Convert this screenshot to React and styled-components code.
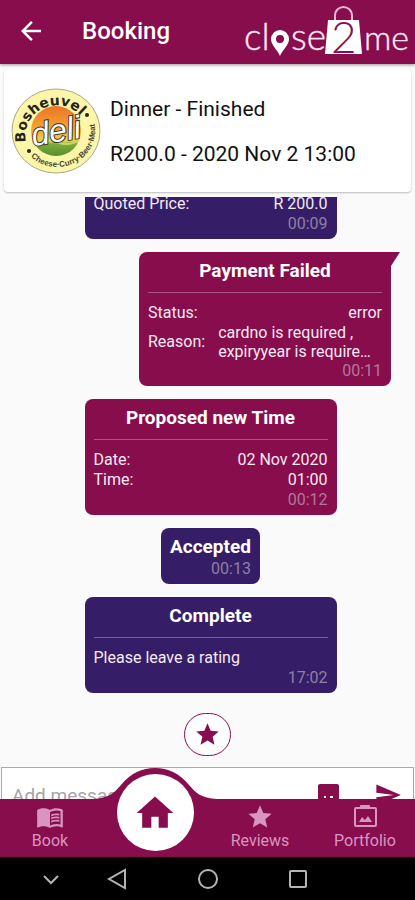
import styled, { createGlobalStyle } from 'styled-components'
import { MdArrowBack, MdHome, MdMenuBook, MdSend, MdStar } from 'react-icons/md'

const MAROON = '#870d4d'
const INDIGO = '#351e67'

const messages = [
      { id: 1, color: INDIGO, rows: [['Quoted Price:', 'R 200.0']], time: '00:09' },
      {
            id: 2,
            color: MAROON,
            own: true,
            title: 'Payment Failed',
            rows: [['Status:', 'error']],
            reason: 'cardno is required , expiryyear is require…',
            time: '00:11',
      },
      { id: 3, color: MAROON, title: 'Proposed new Time', rows: [['Date:', '02 Nov 2020'], ['Time:', '01:00']], time: '00:12' },
      { id: 4, color: INDIGO, small: true, title: 'Accepted', time: '00:13' },
      { id: 5, color: INDIGO, title: 'Complete', text: 'Please leave a rating', time: '17:02' },
]

const Logo = () => (
      <svg width="168" height="58" viewBox="0 0 168 58" role="img" aria-label="close2me">
            <g fill="#ffe6f3" stroke="#ffe6f3" strokeWidth="0.4" fontFamily="Lato, sans-serif" fontWeight="300" fontSize="37">
                  <text x="0" y="48">cl</text>
                  <text x="47" y="48">se</text>
                  <text x="120" y="48" fontSize="34">me</text>
            </g>
            <path fill="#fff" fillRule="evenodd" d="M36 28a9 9 0 0 1 9 9c0 6-6 10-9 17c-3-7-9-11-9-17a9 9 0 0 1 9-9zM36 33a4 4 0 1 0 0 8a4 4 0 0 0 0-8z" />
            <path fill="none" stroke="#f0b5d3" strokeWidth="2" d="M91 18v-4c0-12 17-12 17 0v4" />
            <path fill="#fff" d="M84 18h31l3 34H81z" />
            <text x="87" y="51" fill={MAROON} fontFamily="Lato, sans-serif" fontWeight="300" fontSize="44">2</text>
      </svg>
)

const DeliBadge = () => (
      <svg width="90" height="86" viewBox="0 0 90 86" role="img" aria-label="Bosheuvel deli">
            <defs>
                  <linearGradient id="sky" x1="0" y1="0" x2="0" y2="1">
                        <stop offset="0" stopColor="#e9742b" />
                        <stop offset="0.5" stopColor="#f7a92f" />
                        <stop offset="0.7" stopColor="#f4d24d" />
                        <stop offset="0.76" stopColor="#7dac3a" />
                        <stop offset="1" stopColor="#55902f" />
                  </linearGradient>
                  <path id="upperArc" d="M16 58A31 30 0 1 1 76 38" />
                  <path id="lowerArc" d="M17 66A38 36 0 0 0 83 34" />
            </defs>
            <ellipse cx="45" cy="43" rx="44" ry="42" fill="#fbf6a8" stroke="#a9a88e" />
            <circle cx="45" cy="43" r="25" fill="url(#sky)" />
            <path d="M22 54q12-5 24 0t22-2" fill="none" stroke="#c4d869" strokeWidth="2" />
            <text fill="#262419" fontFamily="'DejaVu Sans', sans-serif" fontWeight="700" fontSize="14">
                  <textPath href="#upperArc" startOffset="4">Bosheuvel</textPath>
            </text>
            <text fill="#4a4734" fontFamily="'Liberation Sans', sans-serif" fontWeight="700" fontSize="8">
                  <textPath href="#lowerArc" startOffset="4">Cheese·Curry·Beer·Meat</textPath>
            </text>
            <circle cx="18" cy="63" r="2" fill="#262419" />
            <circle cx="76" cy="27" r="2" fill="#262419" />
            <text
                  x="20" y="54" fill="#fff" stroke="#3a3427" strokeWidth="2" paintOrder="stroke" transform="rotate(-10 45 43)"
                  fontFamily="'Liberation Sans', sans-serif" fontStyle="italic" fontSize="32"
            >deli</text>
      </svg>
)

const PortfolioIcon = () => (
      <svg width="26" height="26" viewBox="0 0 26 26" aria-hidden="true">
            <rect x="3" y="5" width="21" height="18" rx="1" fill="none" stroke="currentColor" strokeWidth="2" />
            <path fill="currentColor" d="M8 5V3q0-1 1-1h8q1 0 1 1v2zM7 19l3-5l3 3l3-4l4 6z" />
      </svg>
)

const StickerIcon = () => (
      <svg width="22" height="22" viewBox="0 0 22 22" aria-hidden="true">
            <rect width="21" height="21" rx="2" fill="currentColor" />
            <path fill="#fff" d="M6 12h2v2H6zM12 12h3v2h-3zM6 16h9v2H6z" />
      </svg>
)

const Message = ({ color, own, small, title, rows = [], reason, text, time }) => (
      <Bubble $color={color} $own={own} $small={small}>
            {title && <BubbleTitle>{title}</BubbleTitle>}
            {title && !small && <Divider />}
            {rows.map(([label, value]) => (
                  <Row key={label}><span>{label}</span><span>{value}</span></Row>
            ))}
            {reason && <Row><span>Reason:</span><Reason>{reason}</Reason></Row>}
            {text && <Row>{text}</Row>}
            <Time>{time}</Time>
      </Bubble>
)

const App = () => (
      <Screen>
            <GlobalStyle />
            <Header>
                  <BackButton aria-label="Back"><MdArrowBack size={30} /></BackButton>
                  <HeaderTitle>Booking</HeaderTitle>
                  <Logo />
            </Header>
            <BookingCard>
                  <DeliBadge />
                  <BookingInfo>
                        <p>Dinner - Finished</p>
                        <p>R200.0 - 2020 Nov 2 13:00</p>
                  </BookingInfo>
            </BookingCard>
            <Chat>
                  <MessageList>
                        {messages.map(({ id, ...message }) => <Message key={id} {...message} />)}
                        <RateButton aria-label="Leave a rating"><MdStar size={27} /></RateButton>
                  </MessageList>
            </Chat>
            <Composer>
                  <MessageInput aria-label="Message" placeholder="Add message" />
                  <ComposerButton aria-label="Stickers"><StickerIcon /></ComposerButton>
                  <ComposerButton aria-label="Send"><MdSend size={28} /></ComposerButton>
            </Composer>
            <TabBar>
                  <Tab href="#book"><MdMenuBook size={28} />Book</Tab>
                  <HomeSlot>
                        <Bump width="124" height="32" viewBox="0 0 124 32" aria-hidden="true">
                              <path fill={MAROON} d="M0 31C16 30 21 25 28 17C38 5 49 0 62 0S86 5 96 17C103 25 108 30 124 31V32H0z" />
                        </Bump>
                        <HomeLink href="#home" aria-label="Home"><MdHome size={44} /></HomeLink>
                  </HomeSlot>
                  <Tab href="#reviews"><MdStar size={28} />Reviews</Tab>
                  <Tab href="#portfolio"><PortfolioIcon />Portfolio</Tab>
            </TabBar>
            <SystemBar>
                  <SystemButton aria-label="Hide keyboard">
                        <svg width="22" height="22" viewBox="0 0 22 22"><path d="M4 8l7 7l7-7" /></svg>
                  </SystemButton>
                  <SystemButton aria-label="System back">
                        <svg width="22" height="22" viewBox="0 0 22 22"><path d="M18 2v18L2 11z" /></svg>
                  </SystemButton>
                  <SystemButton aria-label="System home">
                        <svg width="22" height="22" viewBox="0 0 22 22"><circle cx="11" cy="11" r="9" /></svg>
                  </SystemButton>
                  <SystemButton aria-label="Recent apps">
                        <svg width="22" height="22" viewBox="0 0 22 22"><rect x="3" y="3" width="16" height="16" rx="1" /></svg>
                  </SystemButton>
            </SystemBar>
      </Screen>
)

export default App


const GlobalStyle = createGlobalStyle`
      * {
            box-sizing: border-box;
      }

      body {
            margin: 0;
            background: #fafafa;
            font-family: Roboto, sans-serif;
      }

      button {
            padding: 0;
            border: 0;
            background: none;
            font: inherit;
      }

      h1, h2, p {
            margin: 0;
      }

      svg {
            display: block;
      }
`

const Screen = styled.div`
      display: flex;
      flex-direction: column;
      height: 100vh;
      overflow: hidden;
`

const Header = styled.header`
      display: flex;
      align-items: center;
      flex-shrink: 0;
      height: 64px;
      padding: 0 3px 2px 16px;
      background: ${MAROON};
      color: #fff;
      box-shadow: 0 1px 3px rgba(0, 0, 0, 0.4);
`

const BackButton = styled.button`
      display: flex;
      color: inherit;
`

const HeaderTitle = styled.h1`
      flex: 1;
      margin-left: 36px;
      font-size: 24px;
      line-height: 28px;
      font-weight: 500;
`

const BookingCard = styled.section`
      display: flex;
      align-items: center;
      flex-shrink: 0;
      gap: 9px;
      margin: 6px 4px 5px;
      padding: 18px 7px;
      border-radius: 4px;
      background: #fff;
      box-shadow: 0 1px 2px rgba(0, 0, 0, 0.25);
`

const BookingInfo = styled.div`
      display: grid;
      gap: 17px;
      color: #111;
      font-size: 21px;
      line-height: 28px;
`

/* column-reverse keeps the newest message in view */
const Chat = styled.main`
      display: flex;
      flex-direction: column-reverse;
      flex: 1;
      min-height: 0;
      overflow-y: auto;
      scrollbar-width: none;
`

const MessageList = styled.div`
      display: flex;
      flex-direction: column;
      align-items: center;
      gap: 13px;
      padding: 13px 24px 11px;
`

const Bubble = styled.article`
      position: relative;
      align-self: ${({ $own }) => ($own ? 'flex-end' : 'center')};
      width: ${({ $small }) => ($small ? 'auto' : '252px')};
      margin-left: 6px;
      padding: 7px 9px 5px;
      border-radius: ${({ $own }) => ($own ? '8px 0 8px 8px' : '8px')};
      background: ${({ $color }) => $color};
      color: #f7e9f1;
      font-size: 16px;
      line-height: 20px;

      &::after {
            content: '';
            display: ${({ $own }) => ($own ? 'block' : 'none')};
            position: absolute;
            top: 0;
            left: 100%;
            width: 9px;
            height: 14px;
            background: inherit;
            clip-path: polygon(0 0, 100% 0, 0 100%);
      }
`

const BubbleTitle = styled.h2`
      color: #fff;
      font-size: 19px;
      line-height: 24px;
      font-weight: 700;
      text-align: center;
`

const Divider = styled.div`
      height: 1px;
      margin: 9px 0 10px;
      background: rgba(255, 255, 255, 0.3);
`

const Row = styled.div`
      display: flex;
      align-items: center;
      justify-content: space-between;
      gap: 13px;
`

const Reason = styled.span`
      flex: 1;
      line-height: 19px;
`

const Time = styled.div`
      color: rgba(205, 195, 205, 0.6);
      text-align: right;
`

const RateButton = styled.button`
      display: flex;
      align-items: center;
      justify-content: center;
      width: 47px;
      height: 43px;
      margin-top: 7px;
      border: 1px solid ${MAROON};
      border-radius: 22px;
      background: #fff;
      color: ${MAROON};
`

const Composer = styled.form`
      display: flex;
      align-items: center;
      flex-shrink: 0;
      gap: 34px;
      height: 56px;
      margin: 0 1px;
      padding: 0 11px 0 10px;
      border: 1px solid #aaa;
      background: #fff;
`

const MessageInput = styled.input`
      flex: 1;
      min-width: 0;
      padding: 0;
      border: 0;
      outline: 0;
      background: none;
      font-family: inherit;
      font-size: 19px;

      &::placeholder {
            color: #a5a5a5;
      }
`

const ComposerButton = styled.button.attrs({ type: 'button' })`
      display: flex;
      color: ${MAROON};
`

/* lies over the lower half of the composer */
const TabBar = styled.nav`
      position: relative;
      z-index: 1;
      display: grid;
      grid-template-columns: repeat(4, 1fr);
      column-gap: 5px;
      flex-shrink: 0;
      height: 58px;
      margin-top: -24px;
      background: ${MAROON};
`

const Tab = styled.a`
      display: flex;
      flex-direction: column;
      align-items: center;
      justify-content: space-between;
      padding: 4px 0 7px;
      color: #d995c1;
      font-size: 16px;
      line-height: 20px;
      text-decoration: none;
`

const HomeSlot = styled.div`
      position: relative;
      display: flex;
      justify-content: center;
`

const Bump = styled.svg`
      position: absolute;
      top: -31px;
      left: 50%;
      transform: translateX(-50%);
`

const HomeLink = styled.a`
      position: absolute;
      top: -25px;
      display: flex;
      align-items: center;
      justify-content: center;
      width: 77px;
      height: 77px;
      border-radius: 50%;
      background: #fff;
      color: ${MAROON};
`

const SystemBar = styled.footer`
      display: grid;
      grid-template-columns: 1fr 2fr 2fr 2fr;
      align-items: center;
      flex-shrink: 0;
      height: 43px;
      padding: 0 72px 0 28px;
      background: #000;
`

const SystemButton = styled.button`
      display: flex;
      justify-content: center;

      path, circle, rect {
            fill: none;
            stroke: #b5b5b5;
            stroke-width: 2px;
      }
`
